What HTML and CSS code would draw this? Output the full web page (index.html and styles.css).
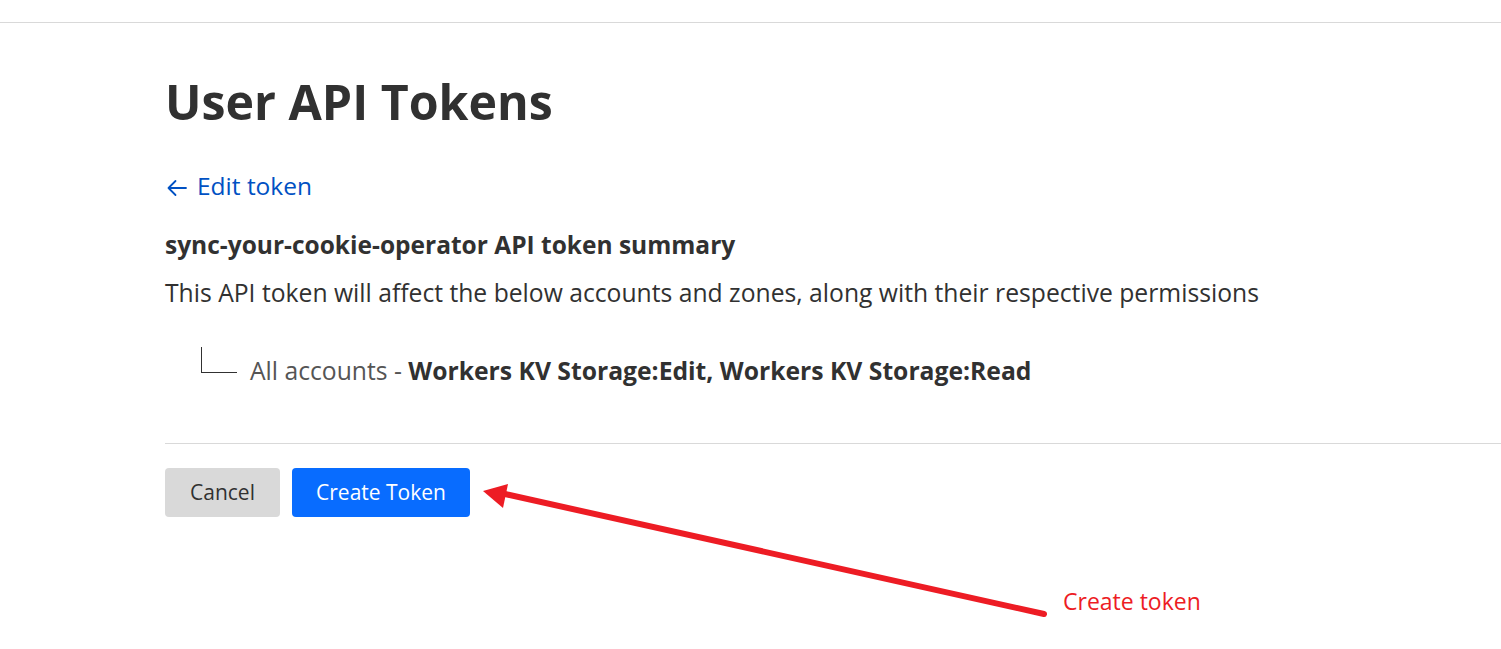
FILE: index.html
```html
<!DOCTYPE html>
<html>
<head>
<meta charset="utf-8">
<link rel="stylesheet" href="styles.css">
</head>
<body>
<div class="topbar"></div>
<main class="page">
  <h1 class="title">User API Tokens</h1>
  <a class="back" href="#"><svg class="back-icon" width="20" height="18" viewBox="0 0 20 18"><path d="M19 9H1.5M8.5 2L1.5 9L8.5 16" fill="none" stroke="#0051c3" stroke-width="1.8" stroke-linecap="round" stroke-linejoin="round"/></svg><span>Edit token</span></a>
  <h2 class="summary-title">sync-your-cookie-operator API token summary</h2>
  <p class="summary-desc">This API token will affect the below accounts and zones, along with their respective permissions</p>
  <div class="tree-row">
    <span class="tree-branch"></span>
    <span class="tree-text">All accounts - <strong>Workers KV Storage:Edit, Workers KV Storage:Read</strong></span>
  </div>
  <div class="divider"></div>
  <div class="actions">
    <button class="btn btn-cancel">Cancel</button>
    <button class="btn btn-primary">Create Token</button>
  </div>
</main>
<svg class="annotation" width="1501" height="649" viewBox="0 0 1501 649">
  <line x1="1044" y1="614" x2="505" y2="494" stroke="#ed1c24" stroke-width="6" stroke-linecap="round"/>
  <polygon points="483,491 508,484 503,508" fill="#ed1c24"/>
</svg>
<div class="annotation-label">Create token</div>
</body>
</html>
```
FILE: styles.css
```css
html, body {
  margin: 0;
  padding: 0;
  background: #ffffff;
}
body {
  font-family: "Open Sans", "Noto Sans", sans-serif;
  color: #313131;
  width: 1501px;
  height: 649px;
  overflow: hidden;
  position: relative;
}
.topbar {
  height: 22px;
  border-bottom: 1px solid #d9d9d9;
}
.page {
  padding-left: 165px;
}
.title {
  margin: 50px 0 0 0;
  font-size: 48.3px;
  font-weight: 700;
  line-height: 56px;
  color: #313131;
}
.back {
  display: inline-flex;
  align-items: center;
  gap: 10px;
  margin-top: 42px;
  padding-left: 2px;
  font-size: 24.5px;
  line-height: 30px;
  color: #0051c3;
  text-decoration: none;
}
.back-icon {
  display: block;
  margin-top: 3px;
}
.summary-title {
  margin: 27px 0 0 0;
  font-size: 24.5px;
  line-height: 32px;
  font-weight: 700;
  color: #313131;
}
.summary-desc {
  margin: 16px 0 0 0;
  font-size: 24.7px;
  line-height: 32px;
  color: #313131;
}
.tree-row {
  display: flex;
  align-items: flex-end;
  margin-top: 38px;
  padding-left: 36px;
}
.tree-branch {
  width: 35px;
  height: 25px;
  border-left: 1px solid #313131;
  border-bottom: 1px solid #313131;
  margin-bottom: 14px;
}
.tree-text {
  margin-left: 13px;
  font-size: 24.7px;
  line-height: 32px;
  color: #555;
}
.tree-text strong {
  color: #313131;
}
.divider {
  margin-top: 56px;
  height: 1px;
  background: #d9d9d9;
}
.actions {
  display: flex;
  gap: 12px;
  margin-top: 24px;
}
.btn {
  font-family: "Open Sans", "Noto Sans", sans-serif;
  font-size: 21px;
  height: 49px;
  border: none;
  border-radius: 4px;
  padding: 0;
  cursor: pointer;
}
.btn-cancel {
  width: 115px;
  background: #d9d9d9;
  color: #313131;
}
.btn-primary {
  width: 178px;
  background: #086cff;
  color: #ffffff;
}
.annotation {
  position: absolute;
  left: 0;
  top: 0;
  pointer-events: none;
}
.annotation-label {
  position: absolute;
  left: 1063px;
  top: 586px;
  font-size: 23px;
  line-height: 30px;
  color: #ed1c24;
}
```
